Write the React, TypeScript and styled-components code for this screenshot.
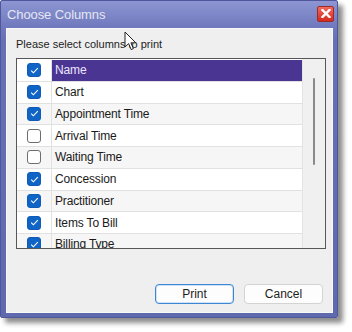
import React from 'react';
import styled, { createGlobalStyle } from 'styled-components';

const GlobalStyle = createGlobalStyle`
  html, body {
    margin: 0;
    padding: 0;
    background: #ffffff;
  }
  body {
    font-family: "Liberation Sans", Arial, sans-serif;
  }
`;

const Stage = styled.div`
  position: relative;
  width: 352px;
  height: 332px;
  overflow: hidden;
`;

const Window = styled.div`
  width: 338px;
  height: 318px;
  box-sizing: border-box;
  display: flex;
  flex-direction: column;
  padding: 0 4px 4px 5px;
  background: linear-gradient(#8d96d2 0px, #7079bd 26px, #6670b4 40px, #5f69ae 100%);
  border: 1px solid #4e579c;
  border-radius: 2px;
  box-shadow: 5px 5px 5px rgba(0, 0, 0, 0.45);
`;

const TitleBar = styled.div`
  height: 27px;
  display: flex;
  align-items: center;
  justify-content: space-between;
  padding: 0 0 0 1px;
`;

const Title = styled.span`
  font-size: 13px;
  color: #e4e7f4;
  letter-spacing: -0.1px;
`;

const CloseButton = styled.div`
  width: 17px;
  height: 16px;
  margin-right: -1px;
  margin-top: -2px;
  border-radius: 2px;
  background: linear-gradient(#f06a5e, #d42a1f);
  border: 1px solid #9e2a23;
  box-sizing: border-box;
  display: flex;
  align-items: center;
  justify-content: center;
`;

const Client = styled.div`
  flex: 1;
  display: flex;
  flex-direction: column;
  background: #efefef;
  border: 1px solid #f9f9f9;
  padding: 7px 8px 8px 9px;
`;

const Prompt = styled.div`
  font-size: 11px;
  line-height: 16px;
  color: #1c1c1c;
  margin-bottom: 6px;
`;

const ListBox = styled.div`
  width: 310px;
  height: 191px;
  box-sizing: border-box;
  border: 1px solid #575757;
  display: flex;
  background: #ffffff;
  overflow: hidden;
`;

const Rows = styled.div`
  flex: 1;
  padding-top: 1px;
`;

const Row = styled.div<{ $shade: boolean }>`
  display: grid;
  grid-template-columns: 35px 1fr;
  height: 21.75px;
  box-sizing: border-box;
  border-bottom: 1px solid #e1e1e1;
  background: ${(p) => (p.$shade ? '#f6f6f6' : '#ffffff')};
`;

const CheckCell = styled.div`
  display: flex;
  align-items: center;
  justify-content: center;
  border-right: 1px solid #e2e2e2;
`;

const TextCell = styled.div<{ $selected: boolean }>`
  display: flex;
  align-items: center;
  padding-left: 3px;
  font-size: 12px;
  letter-spacing: -0.15px;
  color: ${(p) => (p.$selected ? '#ece6ff' : '#1a1a1a')};
  background: ${(p) => (p.$selected ? '#4b3592' : 'transparent')};
`;

const Box = styled.div<{ $checked: boolean }>`
  width: 14px;
  height: 14px;
  box-sizing: border-box;
  border-radius: 3px;
  display: flex;
  align-items: center;
  justify-content: center;
  background: ${(p) => (p.$checked ? '#1064c6' : '#ffffff')};
  border: 1px solid ${(p) => (p.$checked ? '#0f5cb8' : '#6e6e6e')};
`;

const ScrollTrack = styled.div`
  width: 23px;
  background: #f0f0f0;
  border-left: 1px solid #e4e4e4;
  box-sizing: border-box;
  display: flex;
  justify-content: center;
  padding-top: 19px;
`;

const ScrollThumb = styled.div`
  width: 2px;
  height: 87px;
  border-radius: 1px;
  background: #8a8a8a;
`;

const Footer = styled.div`
  flex: 1;
  display: flex;
  align-items: flex-end;
  justify-content: flex-end;
  gap: 10px;
  padding-right: 1px;
`;

const Button = styled.button<{ $default?: boolean }>`
  width: 79px;
  height: 20px;
  box-sizing: border-box;
  padding: 0;
  font-family: "Liberation Sans", Arial, sans-serif;
  font-size: 12px;
  color: #1e1e1e;
  background: #fdfdfd;
  border-radius: 4px;
  border: 1px solid ${(p) => (p.$default ? '#3d86d4' : '#d3d3d3')};
  box-shadow: ${(p) => (p.$default ? 'inset 0 0 0 1px #cfe2f6' : 'none')};
`;

const Cursor = styled.svg`
  position: absolute;
  left: 124px;
  top: 31px;
`;

const columns = [
  { name: 'Name', checked: true },
  { name: 'Chart', checked: true },
  { name: 'Appointment Time', checked: true },
  { name: 'Arrival Time', checked: false },
  { name: 'Waiting Time', checked: false },
  { name: 'Concession', checked: true },
  { name: 'Practitioner', checked: true },
  { name: 'Items To Bill', checked: true },
  { name: 'Billing Type', checked: true },
];

function Check({ checked }: { checked: boolean }) {
  return (
    <Box $checked={checked}>
      {checked && (
        <svg width="9" height="7" viewBox="0 0 9 7">
          <path d="M1.2 3.6 L3.4 5.8 L7.8 1.2" fill="none" stroke="#ffffff" strokeWidth="1.1" />
        </svg>
      )}
    </Box>
  );
}

export default function App() {
  return (
    <Stage>
      <GlobalStyle />
      <Window>
        <TitleBar>
          <Title>Choose Columns</Title>
          <CloseButton>
            <svg width="10" height="9" viewBox="0 0 10 9">
              <path d="M1.5 1 L8.5 8 M8.5 1 L1.5 8" stroke="#ffffff" strokeWidth="2.4" strokeLinecap="square" />
            </svg>
          </CloseButton>
        </TitleBar>
        <Client>
          <Prompt>Please select columns to print</Prompt>
          <ListBox>
            <Rows>
              {columns.map((c, i) => (
                <Row key={c.name} $shade={i > 0 && i % 2 === 0}>
                  <CheckCell>
                    <Check checked={c.checked} />
                  </CheckCell>
                  <TextCell $selected={i === 0}>{c.name}</TextCell>
                </Row>
              ))}
            </Rows>
            <ScrollTrack>
              <ScrollThumb />
            </ScrollTrack>
          </ListBox>
          <Footer>
            <Button $default>Print</Button>
            <Button>Cancel</Button>
          </Footer>
        </Client>
      </Window>
      <Cursor width="14" height="21" viewBox="0 0 14 21">
        <path
          d="M1 1 L1 16 L4.6 12.6 L7.2 18.6 L9.4 17.6 L6.9 11.8 L11.8 11.8 Z"
          fill="#ffffff"
          stroke="#222222"
          strokeWidth="1"
          strokeLinejoin="round"
        />
      </Cursor>
    </Stage>
  );
}
